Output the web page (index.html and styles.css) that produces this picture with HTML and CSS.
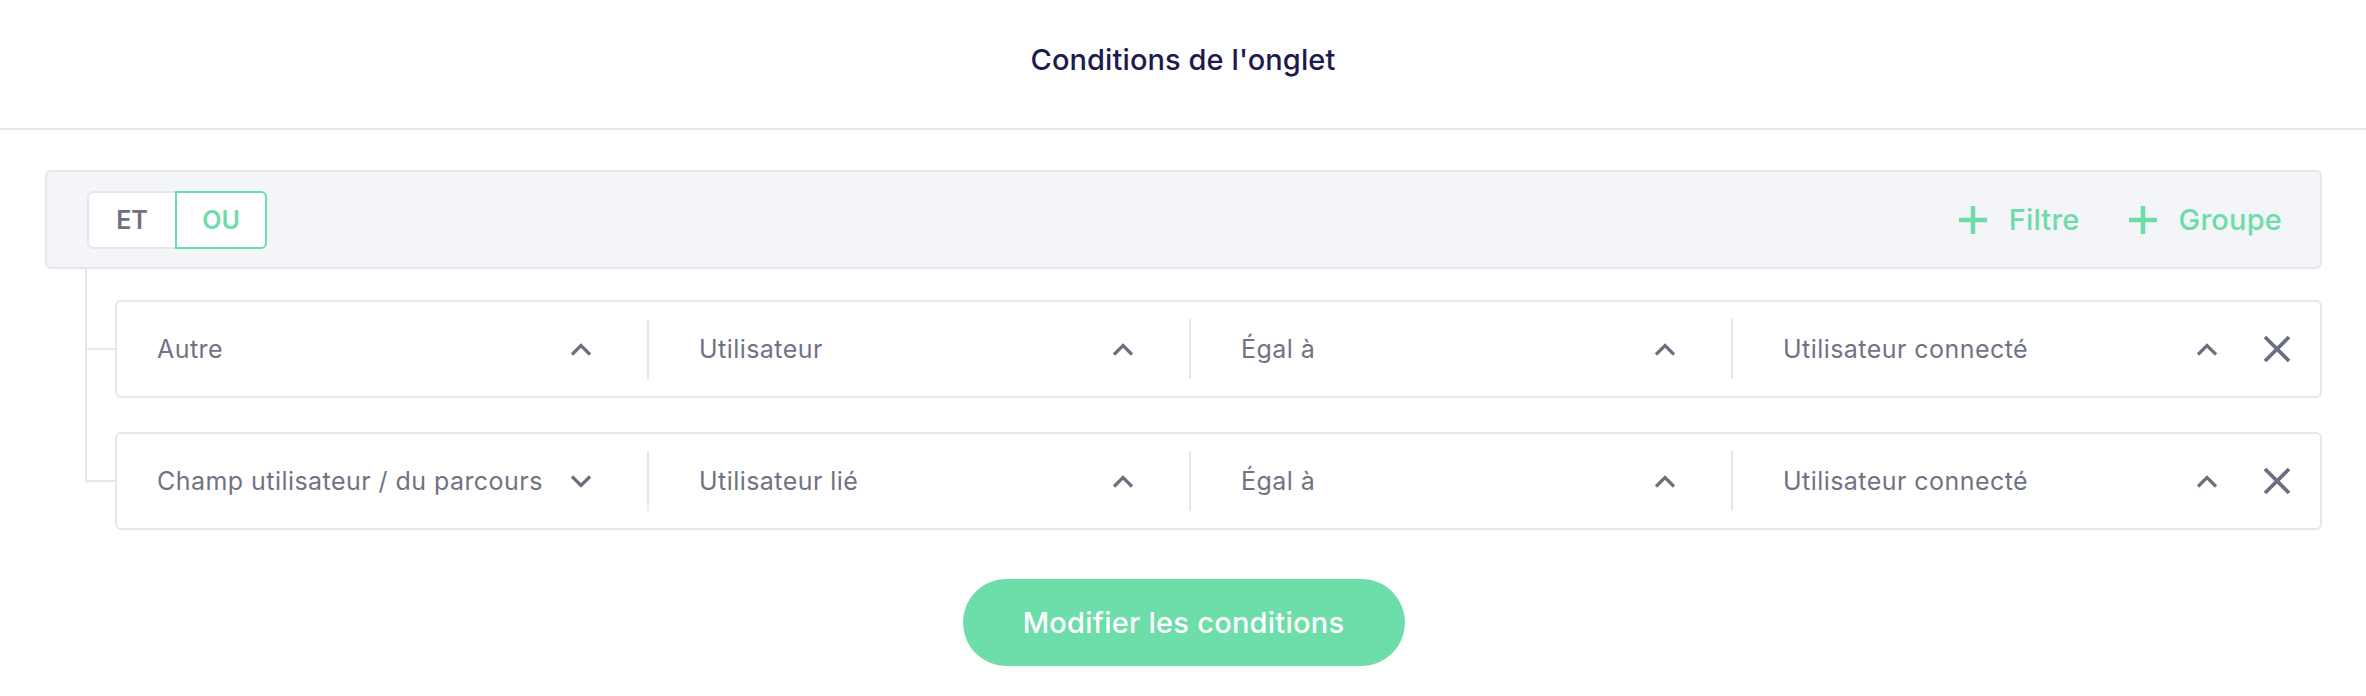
FILE: index.html
```html
<!DOCTYPE html>
<html lang="fr">
<head>
<meta charset="utf-8">
<title>Conditions de l'onglet</title>
<link rel="stylesheet" href="styles.css">
</head>
<body>
<header class="top">
  <h1 class="title">Conditions de l'onglet</h1>
</header>
<main class="content">
  <section class="group">
    <div class="group-head">
      <div class="toggle">
        <button class="toggle-btn et">ET</button>
        <button class="toggle-btn ou">OU</button>
      </div>
      <div class="actions">
        <button class="add">
          <svg class="plus" viewBox="0 0 28 28" width="28" height="28"><path d="M14 0V28M0 14H28"/></svg>
          <span>Filtre</span>
        </button>
        <button class="add">
          <svg class="plus" viewBox="0 0 28 28" width="28" height="28"><path d="M14 0V28M0 14H28"/></svg>
          <span>Groupe</span>
        </button>
      </div>
    </div>
    <div class="children">
      <div class="rule">
        <div class="select first"><span>Autre</span><svg class="chev" viewBox="0 0 22 13" width="22" height="13"><polyline points="2,11.5 11,2.5 20,11.5"/></svg></div>
        <div class="select"><span>Utilisateur</span><svg class="chev" viewBox="0 0 22 13" width="22" height="13"><polyline points="2,11.5 11,2.5 20,11.5"/></svg></div>
        <div class="select"><span>Égal à</span><svg class="chev" viewBox="0 0 22 13" width="22" height="13"><polyline points="2,11.5 11,2.5 20,11.5"/></svg></div>
        <div class="select last"><span>Utilisateur connecté</span><svg class="chev" viewBox="0 0 22 13" width="22" height="13"><polyline points="2,11.5 11,2.5 20,11.5"/></svg></div>
        <button class="remove"><svg viewBox="0 0 28 28" width="28" height="28"><path d="M2 2L26 26M26 2L2 26"/></svg></button>
      </div>
      <div class="rule">
        <div class="select first"><span>Champ utilisateur / du parcours</span><svg class="chev" viewBox="0 0 22 13" width="22" height="13"><polyline points="2,1.5 11,10.5 20,1.5"/></svg></div>
        <div class="select"><span>Utilisateur lié</span><svg class="chev" viewBox="0 0 22 13" width="22" height="13"><polyline points="2,11.5 11,2.5 20,11.5"/></svg></div>
        <div class="select"><span>Égal à</span><svg class="chev" viewBox="0 0 22 13" width="22" height="13"><polyline points="2,11.5 11,2.5 20,11.5"/></svg></div>
        <div class="select last"><span>Utilisateur connecté</span><svg class="chev" viewBox="0 0 22 13" width="22" height="13"><polyline points="2,11.5 11,2.5 20,11.5"/></svg></div>
        <button class="remove"><svg viewBox="0 0 28 28" width="28" height="28"><path d="M2 2L26 26M26 2L2 26"/></svg></button>
      </div>
    </div>
  </section>
  <div class="footer">
    <button class="primary">Modifier les conditions</button>
  </div>
</main>
</body>
</html>
```
FILE: styles.css
```css
* { box-sizing: border-box; }

body {
  margin: 0;
  background: #ffffff;
  font-family: Inter, "Noto Sans", "Liberation Sans", sans-serif;
}

button {
  font-family: inherit;
  cursor: pointer;
}

.top {
  height: 130px;
  border-bottom: 2px solid #e3e6ea;
  display: flex;
  justify-content: center;
  padding-top: 42px;
}

.title {
  margin: 0;
  font-size: 29px;
  line-height: 36px;
  font-weight: 500;
  color: #1c1b4c;
  letter-spacing: 0.1px;
}

.content {
  padding: 40px 44px 0 45px;
}

.group-head {
  height: 99px;
  background: #f4f5f9;
  border: 2px solid #e5e7eb;
  border-radius: 6px;
  display: flex;
  align-items: center;
  justify-content: space-between;
  padding: 0 38px 0 40px;
}

.toggle {
  display: flex;
}

.toggle-btn {
  height: 58px;
  padding: 0;
  font-size: 25px;
  font-weight: 600;
  background: #ffffff;
}

.toggle-btn.et {
  width: 90px;
  color: #6d7081;
  border: 2px solid #e5e7eb;
  border-radius: 6px 0 0 6px;
}

.toggle-btn.ou {
  width: 92px;
  color: #6cdca9;
  border: 2px solid #6cdca9;
  border-radius: 0 6px 6px 0;
  margin-left: -2px;
}

.actions {
  display: flex;
  align-items: center;
  gap: 49px;
}

.add {
  display: flex;
  align-items: center;
  gap: 22px;
  padding: 0;
  border: 0;
  background: none;
  color: #6cdca9;
  font-size: 29px;
  font-weight: 500;
  line-height: 34px;
  letter-spacing: 0.2px;
}

.plus {
  display: block;
  fill: none;
  stroke: #6cdca9;
  stroke-width: 4.5;
}

.children {
  position: relative;
  margin-left: 40px;
  padding-left: 30px;
  padding-top: 31px;
  display: flex;
  flex-direction: column;
  gap: 34px;
}

.children::before {
  content: "";
  position: absolute;
  left: 0;
  top: 0;
  bottom: 47px;
  width: 2px;
  background: #e5e7eb;
}

.rule {
  position: relative;
  height: 98px;
  border: 2px solid #e5e7eb;
  border-radius: 6px;
  background: #ffffff;
  display: flex;
  align-items: center;
  padding-right: 29px;
}

.rule::before {
  content: "";
  position: absolute;
  left: -32px;
  top: calc(50% - 1px);
  width: 30px;
  height: 2px;
  background: #e5e7eb;
}

.select {
  height: 60px;
  width: 542px;
  flex: none;
  display: flex;
  align-items: center;
  justify-content: space-between;
  padding: 0 55px 0 50px;
  border-left: 2px solid #e5e7eb;
  color: #707383;
  font-size: 25px;
  letter-spacing: 0.45px;
  line-height: 30px;
  white-space: nowrap;
}

.select.first {
  width: 530px;
  border-left: 0;
  padding-left: 40px;
}

.select.last {
  flex: 1;
  width: auto;
  padding-right: 0;
}

.chev {
  display: block;
  flex: none;
  fill: none;
  stroke: #6b6f80;
  stroke-width: 3.2;
}

.remove {
  margin-left: 45px;
  padding: 0;
  border: 0;
  background: none;
  display: flex;
}

.remove svg {
  display: block;
  fill: none;
  stroke: #6b6f80;
  stroke-width: 3.8;
}

.footer {
  display: flex;
  justify-content: center;
  padding-top: 49px;
}

.primary {
  width: 442px;
  height: 87px;
  border: 0;
  border-radius: 44px;
  background: #6ddda9;
  color: #ffffff;
  font-size: 29px;
  font-weight: 500;
  letter-spacing: 0.25px;
}
```
